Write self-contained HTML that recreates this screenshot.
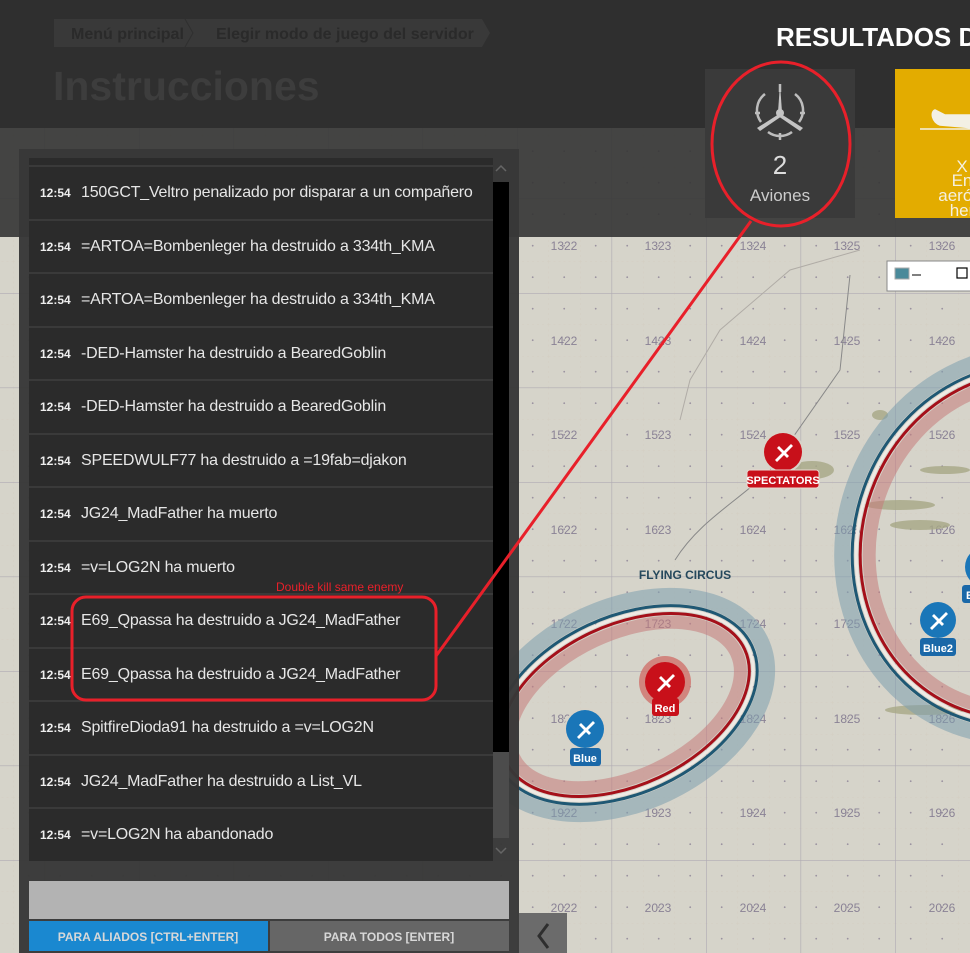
<!DOCTYPE html>
<html><head><meta charset="utf-8"><style>
*{margin:0;padding:0;box-sizing:border-box}
body{width:970px;height:953px;overflow:hidden;background:#d5d3c9;position:relative;font-family:"Liberation Sans",sans-serif}
.abs{position:absolute}
.row{position:absolute;left:29px;width:464px;height:53px;border-top:2px solid #3a3a3a;background:#2b2b2b;color:#e6e6e6}
.row .t{position:absolute;left:11px;top:19px;font-size:12px;font-weight:bold;color:#eee}
.row .m{position:absolute;left:52px;top:17px;font-size:16px;letter-spacing:-0.2px;white-space:nowrap}
</style></head><body>
<svg class="abs" style="left:0;top:0" width="970" height="953">
<defs>
<pattern id="minor" x="517" y="198.5" width="31.5" height="31.5" patternUnits="userSpaceOnUse">
<path d="M0 0H31.5M0 0V31.5" stroke="#d2c9bd" stroke-width="1" stroke-dasharray="2 3" fill="none" opacity=".6"/>
<circle cx="15.7" cy="15.7" r="0.9" fill="#9a92a0"/>
</pattern>
<pattern id="major" x="517" y="198.5" width="94.5" height="94.5" patternUnits="userSpaceOnUse">
<path d="M0 0H94.5M0 0V94.5" stroke="#b0abb3" stroke-width="1.3" fill="none"/>
</pattern>
</defs>
<rect x="0" y="128" width="970" height="825" fill="#d6d4ca"/>
<rect x="0" y="128" width="970" height="825" fill="url(#minor)"/>
<rect x="0" y="128" width="970" height="825" fill="url(#major)"/>
<g font-family="Liberation Sans" font-size="12" fill="#8a8295" text-anchor="middle">
<text x="564" y="250">1322</text><text x="658" y="250">1323</text><text x="753" y="250">1324</text><text x="847" y="250">1325</text><text x="942" y="250">1326</text>
<text x="564" y="345">1422</text><text x="658" y="345">1423</text><text x="753" y="345">1424</text><text x="847" y="345">1425</text><text x="942" y="345">1426</text>
<text x="564" y="439">1522</text><text x="658" y="439">1523</text><text x="753" y="439">1524</text><text x="847" y="439">1525</text><text x="942" y="439">1526</text>
<text x="564" y="534">1622</text><text x="658" y="534">1623</text><text x="753" y="534">1624</text><text x="847" y="534">1625</text><text x="942" y="534">1626</text>
<text x="564" y="628">1722</text><text x="658" y="628">1723</text><text x="753" y="628">1724</text><text x="847" y="628">1725</text><text x="942" y="628">1726</text>
<text x="564" y="723">1822</text><text x="658" y="723">1823</text><text x="753" y="723">1824</text><text x="847" y="723">1825</text><text x="942" y="723">1826</text>
<text x="564" y="817">1922</text><text x="658" y="817">1923</text><text x="753" y="817">1924</text><text x="847" y="817">1925</text><text x="942" y="817">1926</text>
<text x="564" y="912">2022</text><text x="658" y="912">2023</text><text x="753" y="912">2024</text><text x="847" y="912">2025</text><text x="942" y="912">2026</text>
</g>
<g fill="#a7a886" opacity=".8">
<ellipse cx="812" cy="470" rx="22" ry="9"/><ellipse cx="900" cy="505" rx="35" ry="5"/><ellipse cx="920" cy="525" rx="30" ry="5"/><ellipse cx="925" cy="710" rx="40" ry="5"/><ellipse cx="880" cy="415" rx="8" ry="5"/><ellipse cx="945" cy="470" rx="25" ry="4"/>
</g>
<path d="M680 420 L690 380 L720 330 L790 270 L860 250" stroke="#b0aca6" fill="none"/>
<path d="M675 560 C700 520 740 500 770 470 L840 370 L850 275" stroke="#888" fill="none"/>
<g transform="rotate(-25 625 705)" fill="none">
<ellipse cx="625" cy="705" rx="150" ry="98" stroke="#7d9eae" stroke-opacity=".55" stroke-width="16"/>
<ellipse cx="625" cy="705" rx="140" ry="88" stroke="#1f5874" stroke-width="3"/>
<ellipse cx="625" cy="705" rx="136" ry="84" stroke="#efeae4" stroke-width="3"/>
<ellipse cx="625" cy="705" rx="132" ry="80" stroke="#a5101a" stroke-width="3"/>
<ellipse cx="625" cy="705" rx="123" ry="71" stroke="#c77a7a" stroke-opacity=".55" stroke-width="13"/>
</g>
<g transform="rotate(20 1022 545)" fill="none">
<ellipse cx="1022" cy="545" rx="178" ry="193" stroke="#7d9eae" stroke-opacity=".55" stroke-width="16"/>
<ellipse cx="1022" cy="545" rx="168" ry="183" stroke="#1f5874" stroke-width="3"/>
<ellipse cx="1022" cy="545" rx="164" ry="179" stroke="#efeae4" stroke-width="3"/>
<ellipse cx="1022" cy="545" rx="160" ry="175" stroke="#a5101a" stroke-width="3"/>
<ellipse cx="1022" cy="545" rx="151" ry="166" stroke="#c77a7a" stroke-opacity=".55" stroke-width="13"/>
</g>
<text x="685" y="579" font-family="Liberation Sans" font-weight="bold" font-size="12" fill="#25485c" text-anchor="middle">FLYING CIRCUS</text>
<g font-family="Liberation Sans" font-weight="bold" font-size="11" fill="#fff" text-anchor="middle">
<circle cx="783" cy="452" r="21" fill="#d8d3c8"/><circle cx="783" cy="452" r="19" fill="#c8101a"/>
<rect x="747" y="470" width="72" height="18" rx="3" fill="#c8101a" stroke="#e8d8d0"/><text x="783" y="484">SPECTATORS</text>
<circle cx="665" cy="682" r="26" fill="#d0706a" opacity=".8"/><circle cx="665" cy="682" r="20" fill="#c8101a"/>
<rect x="652" y="698" width="27" height="18" rx="3" fill="#c8101a"/><text x="665" y="712">Red</text>
<circle cx="585" cy="729" r="21" fill="#d8d3c8"/><circle cx="585" cy="729" r="19" fill="#1a76b8"/>
<rect x="570" y="748" width="31" height="18" rx="3" fill="#1a68a8"/><text x="585" y="762">Blue</text>
<circle cx="938" cy="620" r="20" fill="#d8d3c8"/><circle cx="938" cy="620" r="18" fill="#1a76b8"/>
<rect x="920" y="638" width="36" height="18" rx="3" fill="#1a68a8"/><text x="938" y="652">Blue2</text>
<circle cx="985" cy="567" r="20" fill="#1a76b8"/><rect x="962" y="585" width="20" height="18" rx="3" fill="#1a68a8"/><text x="970" y="599">B</text>
<g fill="#fff">
<path d="M775 460 L791 444 L793 446 L777 462Z M779 446 L789 456 L787 458 L777 448Z"/>
<path d="M657 690 L673 674 L675 676 L659 692Z M661 676 L671 686 L669 688 L659 678Z"/>
<path d="M577 737 L593 721 L595 723 L579 739Z M581 723 L591 733 L589 735 L579 725Z"/>
<path d="M930 628 L946 612 L948 614 L932 630Z M934 614 L944 624 L942 626 L932 616Z"/>
</g>
</g>
<rect x="0" y="0" width="970" height="128" fill="#2f2f2f"/>
<rect x="0" y="128" width="970" height="109" fill="#343434" fill-opacity=".9"/>
<path d="M54 19 H482 L490 33 L482 47 H54Z" fill="#393939"/>
<path d="M185 19 L193 33 L185 47" stroke="#2f2f2f" fill="none"/>
<text x="71" y="39" font-family="Liberation Sans" font-weight="bold" font-size="16" fill="#2a2a2a">Menú principal</text>
<text x="216" y="39" font-family="Liberation Sans" font-weight="bold" font-size="16" fill="#2a2a2a">Elegir modo de juego del servidor</text>
<text x="53" y="100" font-family="Liberation Sans" font-weight="bold" font-size="41" fill="#3d3d3d">Instrucciones</text>
<text x="776" y="46" font-family="Liberation Sans" font-weight="bold" font-size="26" fill="#fff">RESULTADOS D</text>
<rect x="705" y="69" width="150" height="149" fill="#3a3a3a"/>
<g stroke="#bdbdbd" fill="none" stroke-width="2.5">
<path d="M765 94 A20 20 0 0 0 761 122 M795 94 A20 20 0 0 1 799 122 M768 132 A20 20 0 0 0 792 132"/>
<path d="M780 84 V92 M760 113 H755 M800 113 H805 M780 133 V140"/>
</g>
<g fill="#c4c4c4"><path d="M778 112 L780 84 L782 112Z"/><path d="M779 114 L757 128 L760 131 L782 116Z"/><path d="M781 114 L803 128 L800 131 L778 116Z"/><circle cx="780" cy="113" r="4"/></g>
<text x="780" y="174" font-family="Liberation Sans" font-size="26" fill="#ddd" text-anchor="middle">2</text>
<text x="780" y="201" font-family="Liberation Sans" font-size="17" fill="#ccc" text-anchor="middle">Aviones</text>
<rect x="895" y="69" width="80" height="149" fill="#e3ac00"/>
<path d="M920 129 H975 M935 110 C930 112 932 122 940 125 L975 128 L975 115 L945 115 Z" fill="#f3f0e4" stroke="#f3f0e4" stroke-width="1.5"/>
<g font-family="Liberation Sans" font-size="17" fill="#f5f0e0" text-anchor="middle"><text x="962" y="172">X</text><text x="962" y="186">En</text><text x="960" y="201">aeród</text><text x="962" y="216">her</text></g>
<rect x="887" y="261" width="90" height="30" fill="#fff" stroke="#888"/>
<rect x="895" y="268" width="14" height="11" fill="#4a8a9a" stroke="#aaa"/><path d="M912 275 H921" stroke="#000"/><rect x="957" y="268" width="10" height="10" fill="none" stroke="#000" stroke-width="1.2"/>
<rect x="19" y="149" width="500" height="804" fill="#383838" fill-opacity=".97"/>
<rect x="29" y="158" width="464" height="703" fill="#2b2b2b"/>
<rect x="493" y="182" width="16" height="570" fill="#000"/>
<rect x="493" y="752" width="16" height="86" fill="#4c4c4c"/>
<path d="M496 171 L501 166 L506 171 M496 848 L501 853 L506 848" stroke="#666" fill="none" stroke-width="1.5"/>
<rect x="29" y="881" width="480" height="38" fill="#b3b3b3"/>
<rect x="29" y="921" width="239" height="30" fill="#1a88d0"/>
<rect x="270" y="921" width="239" height="30" fill="#666"/>
<g font-family="Liberation Sans" font-weight="bold" font-size="12" fill="#d8d8d8" text-anchor="middle"><text x="148" y="941">PARA ALIADOS [CTRL+ENTER]</text><text x="389" y="941">PARA TODOS [ENTER]</text></g>
<rect x="519" y="913" width="48" height="40" fill="#6b6b6b"/>
<path d="M548 924 L539 936 L548 948" stroke="#2e2e2e" stroke-width="3" fill="none"/>
</svg>
<div class="row" style="top:165px"><span class="t">12:54</span><span class="m">150GCT_Veltro penalizado por disparar a un compañero</span></div>
<div class="row" style="top:219px"><span class="t">12:54</span><span class="m">=ARTOA=Bombenleger ha destruido a 334th_KMA</span></div>
<div class="row" style="top:272px"><span class="t">12:54</span><span class="m">=ARTOA=Bombenleger ha destruido a 334th_KMA</span></div>
<div class="row" style="top:326px"><span class="t">12:54</span><span class="m">-DED-Hamster ha destruido a BearedGoblin</span></div>
<div class="row" style="top:379px"><span class="t">12:54</span><span class="m">-DED-Hamster ha destruido a BearedGoblin</span></div>
<div class="row" style="top:433px"><span class="t">12:54</span><span class="m">SPEEDWULF77 ha destruido a =19fab=djakon</span></div>
<div class="row" style="top:486px"><span class="t">12:54</span><span class="m">JG24_MadFather ha muerto</span></div>
<div class="row" style="top:540px"><span class="t">12:54</span><span class="m">=v=LOG2N ha muerto</span></div>
<div class="row" style="top:593px"><span class="t">12:54</span><span class="m">E69_Qpassa ha destruido a JG24_MadFather</span></div>
<div class="row" style="top:647px"><span class="t">12:54</span><span class="m">E69_Qpassa ha destruido a JG24_MadFather</span></div>
<div class="row" style="top:700px"><span class="t">12:54</span><span class="m">SpitfireDioda91 ha destruido a =v=LOG2N</span></div>
<div class="row" style="top:754px"><span class="t">12:54</span><span class="m">JG24_MadFather ha destruido a List_VL</span></div>
<div class="row" style="top:807px;height:54px"><span class="t">12:54</span><span class="m">=v=LOG2N ha abandonado</span></div>
<svg class="abs" style="left:0;top:0" width="970" height="953">
<ellipse cx="781" cy="144" rx="69" ry="82" fill="none" stroke="#e8202a" stroke-width="3"/>
<path d="M751 221 L436 656" stroke="#e8202a" stroke-width="3"/>
<rect x="72" y="597" width="364" height="103" rx="14" fill="none" stroke="#e8202a" stroke-width="3"/>
<text x="276" y="591" font-family="Liberation Sans" font-size="12" fill="#e8202a">Double kill same enemy</text>
</svg>
</body></html>
